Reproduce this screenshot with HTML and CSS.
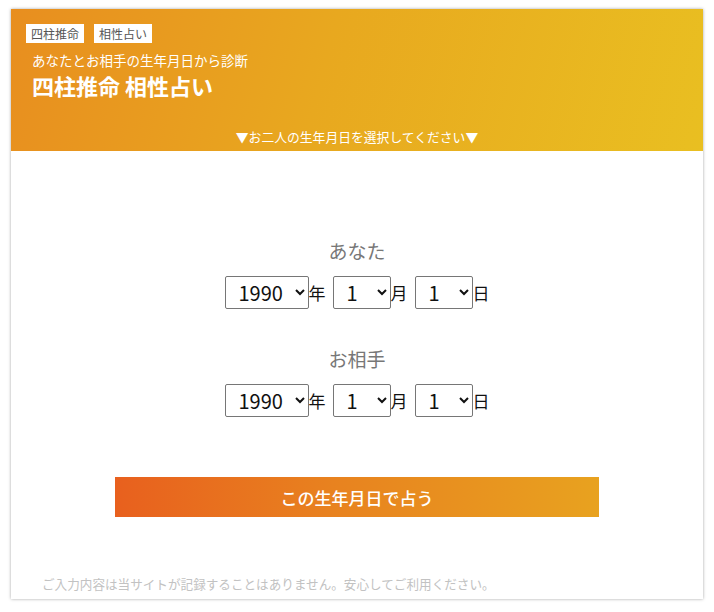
FILE: index.html
```html
<!DOCTYPE html>
<html lang="ja">
<head>
  <title>四柱推命 相性占い</title>
  <meta charset="UTF-8">
  <link rel="stylesheet" href="styles.css">
</head>
<body>
  <div class="page">
    <div class="card">
      <div class="header">
        <div class="tags">
          <span class="tag">四柱推命</span>
          <span class="tag">相性占い</span>
        </div>
        <p class="subtitle">あなたとお相手の生年月日から診断</p>
        <h1 class="title">四柱推命 相性占い</h1>
        <p class="notice">▼お二人の生年月日を選択してください▼</p>
      </div>

      <form class="form">
        <div class="person">
          <div class="person-label">あなた</div>
          <div class="date-row">
            <select class="sel-year"><option>1990</option></select><span class="unit">年</span>
            <select class="sel-small"><option>1</option></select><span class="unit">月</span>
            <select class="sel-small"><option>1</option></select><span class="unit">日</span>
          </div>
        </div>

        <div class="person">
          <div class="person-label">お相手</div>
          <div class="date-row">
            <select class="sel-year"><option>1990</option></select><span class="unit">年</span>
            <select class="sel-small"><option>1</option></select><span class="unit">月</span>
            <select class="sel-small"><option>1</option></select><span class="unit">日</span>
          </div>
        </div>

        <button type="button" class="submit">この生年月日で占う</button>
      </form>

      <p class="footnote">ご入力内容は当サイトが記録することはありません。安心してご利用ください。</p>
    </div>
  </div>
</body>
</html>
```

FILE: styles.css
```css
* {
  box-sizing: border-box;
}

body {
  margin: 0;
  font-family: "Noto Sans CJK JP", "Noto Sans", sans-serif;
  background: #ffffff;
  color: #333333;
}

.page {
  padding: 9px 11px 13px;
}

.card {
  height: 590px;
  display: flex;
  flex-direction: column;
  background: #ffffff;
  box-shadow: 0 0 3px rgba(0, 0, 0, 0.35);
}

.header {
  height: 142px;
  display: flex;
  flex-direction: column;
  padding: 15px 15px 5px;
  background: linear-gradient(105deg, #e88e1f 0%, #e8a81f 45%, #e9bf21 100%);
  color: #ffffff;
}

.tags {
  display: flex;
  gap: 10px;
}

.tag {
  padding: 0 5px;
  font-size: 12px;
  line-height: 19px;
  color: #555555;
  background: #ffffff;
}

.subtitle {
  margin: 9px 0 0 6px;
  font-size: 13.5px;
  line-height: 17px;
}

.title {
  margin: 3px 0 0 6px;
  font-size: 22px;
  line-height: 26px;
  font-weight: 700;
}

.notice {
  margin: auto 0 0;
  font-size: 12.8px;
  line-height: 18px;
  text-align: center;
}

.form {
  display: flex;
  flex-direction: column;
  align-items: center;
  padding-top: 88px;
}

.person {
  display: flex;
  flex-direction: column;
  align-items: center;
  gap: 13px;
}

.person + .person {
  margin-top: 38px;
}

.person-label {
  font-size: 19px;
  line-height: 24px;
  color: #777777;
}

.date-row {
  display: flex;
  align-items: center;
  height: 33px;
}

select {
  height: 33px;
  padding: 0 0 0 9px;
  font-family: inherit;
  font-size: 20px;
  color: #111111;
  background: #ffffff;
  border: 1px solid #767676;
  border-radius: 2px;
}

.sel-year {
  width: 84px;
}

.sel-small {
  width: 58px;
}

.unit {
  font-size: 17px;
  color: #111111;
  margin-right: 7px;
}

.unit:last-child {
  margin-right: 0;
}

.submit {
  width: 484px;
  height: 40px;
  margin-top: 60px;
  border: none;
  font-family: inherit;
  font-size: 17px;
  font-weight: 500;
  color: #ffffff;
  background: linear-gradient(90deg, #e8601e 0%, #e8821f 45%, #e8a21f 100%);
  cursor: pointer;
}

.footnote {
  margin: auto 0 0;
  padding: 0 0 6px 31px;
  font-size: 12.6px;
  line-height: 18px;
  color: #c2c2c2;
}
```
